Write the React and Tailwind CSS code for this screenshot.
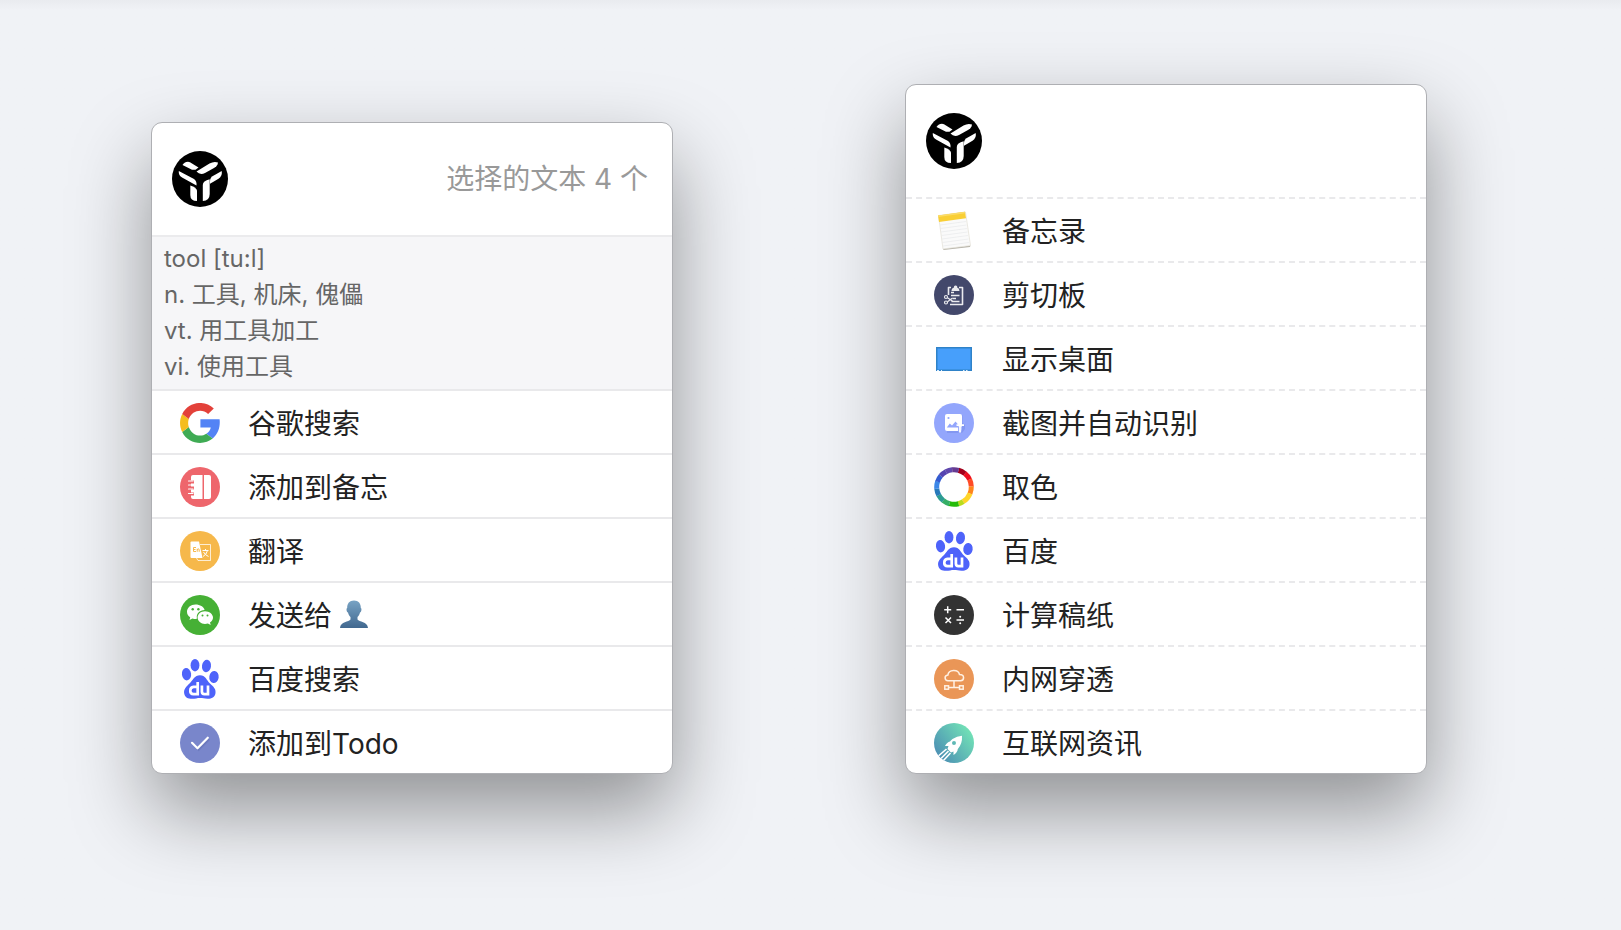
function Circle({ fill, children }) {
  return (
    <svg viewBox="0 0 40 40" className="size-10 shrink-0" aria-hidden="true">
      <circle cx="20" cy="20" r="20" fill={fill} />
      {children}
    </svg>
  );
}

function Logo() {
  return (
    <svg viewBox="0 0 56 56" className="size-14 shrink-0" role="img" aria-label="Logo">
      <circle cx="28" cy="28" r="28" fill="#000" />
      <g fill="#fff">
        <path d="M10.500 14Q12 11 16 10.800L18 11.300L26.500 16.500L23.500 18.800L20 18.800Z" />
        <path d="M24.500 20.500L37.500 12.500Q42 10 46 11.500L45.500 13.500Q44.500 15.500 42 17L33 22Q28 24.500 24.500 20.500Z" />
        <path d="M6.800 20L22 28Q25 30 24.500 34.500L10.500 26.800Q6.200 24.500 6.800 20Z" />
        <path d="M49.700 20L40 25.500Q37.500 27.500 38 32.800L46.500 27.800Q50.700 25 49.700 20Z" />
        <path d="M18.300 34.500L21 35.500Q25 37.500 25 40V50Q18.300 50 18.300 44Z" />
        <path d="M30.800 34Q30.800 29.800 37.700 28.300V43Q37.700 49.500 30.800 50Z" />
      </g>
    </svg>
  );
}

function GoogleIcon() {
  return (
    <svg viewBox="0 0 40 40" className="size-10 shrink-0" aria-hidden="true">
      <path fill="#5383f5" d="M20.400 16.200H39.600C40.400 23.500 38.500 30.500 32.700 35.600L26.300 30.700C28.900 29 30.300 26.900 30.800 24.400H20.400Z" />
      <path fill="#3fab54" d="M32.700 35.600C24.500 42.500 8.500 41.800 2.200 29L8.800 23.900C11.600 32.300 20.500 34.700 26.300 30.700Z" />
      <path fill="#f4bd1e" d="M2.200 29C-.7 23.200 -.7 16.800 2.200 11L8.800 16.100C7.900 18.700 7.900 21.300 8.800 23.900Z" />
      <path fill="#e3413a" d="M2.200 11C8.500 -1.500 24.500 -3.400 33.800 5.400L28.100 11C22 5.300 12 7.400 8.800 16.100Z" />
    </svg>
  );
}

function NotebookIcon() {
  return (
    <Circle fill="#ee666c">
      <path fill="#fff" d="M13 8H22.500V32H13Q11 32 11 30V28.500H14V25.500H11V22.500H14V19.500H11V16.500H14V13.500H11V10Q11 8 13 8ZM24 8H29Q31 8 31 10V30Q31 32 29 32H24Z" />
      <path stroke="#fff" strokeWidth="1.200" strokeLinecap="round" fill="none" d="M8.500 14H13M8.500 18H13M8.500 22H13M8.500 26.500H13" />
    </Circle>
  );
}

function TranslateIcon() {
  return (
    <Circle fill="#f6b84b">
      <path d="M20 13.500H30.500V29.500H18L16.500 27" fill="none" stroke="#fff" strokeOpacity=".75" strokeWidth="1" />
      <path fill="#fff" d="M11.500 10.500H19L22.500 27H11.500Q10.500 27 10.500 26V11.500Q10.500 10.500 11.500 10.500Z" />
      <path fill="none" stroke="#f6b84b" strokeWidth="1" d="M16 16.500H13.500V20.500H16M13.500 18.500H15.500M17.200 20.800V17.800M17.200 18.500Q19.200 17 19.200 18.800V20.800" />
      <path fill="none" stroke="#fff" strokeWidth="1" d="M22.500 19.500H28.500M25.500 18V19.500M27.500 19.500Q26.500 23.500 23 25.500M23.500 21Q25 24 28.500 25.500" />
    </Circle>
  );
}

function WechatIcon() {
  return (
    <Circle fill="#46b035">
      <path fill="#fff" d="M15.500 9.500C10.800 9.500 7 12.700 7 16.700C7 19 8.200 21 10.200 22.300L9.500 25L12.500 23.400C14 23.900 15.500 24 17 23.800C15.800 18.300 19.700 15.200 24.600 15C23.800 11.800 20 9.500 15.500 9.500Z" />
      <path fill="#fff" d="M25 16.200C20.900 16.200 17.600 19 17.600 22.600C17.600 26.200 20.900 29 25 29C26 29 27 28.800 27.900 28.500L30.700 30L30 27.500C31.900 26.300 33 24.500 33 22.600C33 19 29.200 16.200 25 16.200Z" />
      <g fill="#46b035">
        <circle cx="12.700" cy="14.300" r="1.200" />
        <circle cx="18.400" cy="14.300" r="1.200" />
        <circle cx="22.500" cy="20.500" r="1" />
        <circle cx="27.500" cy="20.500" r="1" />
      </g>
    </Circle>
  );
}

function BaiduIcon() {
  return (
    <svg viewBox="0 0 40 40" className="size-10 shrink-0" aria-hidden="true">
      <g fill="#4e63fa">
        <ellipse cx="15" cy="6.200" rx="4.400" ry="6.200" />
        <ellipse cx="26.500" cy="7" rx="4.500" ry="6.200" transform="rotate(8 26.500 7)" />
        <ellipse cx="6.500" cy="15.200" rx="4.600" ry="6.200" transform="rotate(-8 6.500 15.200)" />
        <ellipse cx="34" cy="18" rx="4.700" ry="6" transform="rotate(8 34 18)" />
        <path d="M20 16.200C25.500 16.200 26.500 21 30 24.500C33.500 28 36 29.500 35.500 34C35 38.500 31 40 27.500 39.800C24 39.600 23 39 20 39C17 39 15.500 39.800 12 39.800C8 39.800 5 38.500 4.200 34.500C3.400 30 6.500 27.500 9.500 24.500C13 21 14.500 16.200 20 16.200Z" />
      </g>
      <g fill="none" stroke="#fff" strokeWidth="2.700">
        <path d="M17.700 23V36.500M17.700 27.800H13.500Q10.300 28.300 10.300 31.500V32Q10.300 35 13.500 35.200H17.700" />
        <path d="M21.900 26.500V32.500Q21.900 35.200 24.400 35.200H28V26.500" />
      </g>
    </svg>
  );
}

function CheckIcon() {
  return (
    <Circle fill="#7986cb">
      <path d="M12.500 20L17.700 25.500L28 15" transform="translate(1 1)" fill="none" stroke="#5f6cb0" strokeOpacity=".45" strokeWidth="2.500" />
      <path d="M12 19.800L17.500 25.300L27.800 14.700" fill="none" stroke="#fff" strokeWidth="2.200" strokeLinecap="round" strokeLinejoin="round" />
    </Circle>
  );
}

function NotesIcon() {
  return (
    <svg viewBox="0 0 40 40" className="size-10 shrink-0" aria-hidden="true">
      <path d="M9 37.500L36.500 34.500L36 36L9.500 39Z" fill="#b5b2a8" />
      <path d="M4.500 4.500L31.500 1L36.500 34.500L9 38Z" fill="#fafafa" stroke="#e2e0d6" strokeWidth=".7" />
      <path d="M4 4.500L31 .800L32 7.200L5 11Z" fill="#f9cf35" />
      <path d="M4 4.500L31 .800L31.200 2.200L4.200 6Z" fill="#fbdc68" />
      <path d="M6 14L32 10.500M6.500 17.500L32.500 14M7 21L33 17.500M7.500 24.500L33.500 21M8 28L34 24.500M8.500 31.500L34.500 28M9 35L35 31.500" stroke="#e8e9eb" strokeWidth=".7" />
    </svg>
  );
}

function ClipboardIcon() {
  return (
    <Circle fill="#43486b">
      <g fill="none" stroke="#ebebef" strokeWidth="1.600" strokeLinejoin="round">
        <path d="M17 12.500H14.500V20M25 12.500H28.500V29.500H16" />
        <path d="M17 17.500H20M17 20.500H25.500M18.500 23.500H22M17.500 26.500H25.500" strokeWidth="1.300" />
        <circle cx="12" cy="22" r="1.500" strokeWidth="1.200" />
        <circle cx="12" cy="27.500" r="1.500" strokeWidth="1.200" />
        <path d="M13.500 22.700L19 26.500M13.500 26.800L18.500 23" strokeWidth="1.200" />
      </g>
      <path fill="#ebebef" d="M17.500 16Q17.500 13 20 12.500V11.500A1.800 1.800 0 0 1 23.200 11.500V12.500Q25.500 13 25.500 16Z" />
    </Circle>
  );
}

function DesktopIcon() {
  return (
    <svg viewBox="0 0 40 40" className="size-10 shrink-0" aria-hidden="true">
      <rect x="2" y="8" width="36" height="24" fill="#2f82c8" />
      <rect x="3.500" y="9.500" width="33" height="21" fill="#479ffb" />
      <path d="M3 31.500H5M7 31.500H8M29 31.500H30.500M32 31.500H33.500" stroke="#d9edff" strokeWidth="1.200" />
    </svg>
  );
}

function CaptureIcon() {
  return (
    <Circle fill="#93a6fc">
      <path fill="#7388e6" fillOpacity=".5" d="M13 12H28.500V20L31 22V26L28 30H13Z" />
      <rect x="11" y="11" width="17" height="17" rx="2" fill="#fff" />
      <circle cx="14.500" cy="15" r="1.100" fill="#93a6fc" />
      <path d="M12.800 24.500L15.800 20.500L18 22.500L21.500 18.500L24.500 22V24.500Z" fill="#93a6fc" />
      <path d="M25.900 23.500V29.500" stroke="#93a6fc" strokeWidth="3.600" />
      <path d="M22.500 22.200H30M26 20.500V29.500" stroke="#fff" strokeWidth="1.800" />
    </Circle>
  );
}

const wheel = ["#a3001b", "#ec0e20", "#ff4b26", "#ff851c", "#ffd529", "#b9dc1c", "#25bb08", "#35ae66", "#2d9c93", "#2879ba", "#3b87e8", "#345cd0", "#5544b0", "#6048ad", "#663b91"];
const wheelAngles = [-75, -51, -26, -2, 22, 58, 75, 105, 128, 152, 174, 198, 220, 242, 264, 285];

function ColorIcon() {
  return (
    <svg viewBox="0 0 40 40" className="size-10 shrink-0" aria-hidden="true">
      {wheel.map((color, i) => {
        const span = wheelAngles[i + 1] - wheelAngles[i] + 0.5;
        return (
          <circle key={color} cx="20" cy="20" r="17.300" fill="none" stroke={color} strokeWidth="5" pathLength="360" strokeDasharray={`${span} ${360 - span}`} transform={`rotate(${wheelAngles[i]} 20 20)`} />
        );
      })}
    </svg>
  );
}

function CalculatorIcon() {
  return (
    <Circle fill="#333">
      <g stroke="#fff" strokeWidth="1.500" fill="none">
        <path d="M10.200 14.700H17.200M13.700 11.200V18.200M22.500 14.700H30M11.500 22.500L17 28M17 22.500L11.500 28M22.500 25H30" />
      </g>
      <circle cx="26.200" cy="21.800" r="1" fill="#fff" />
      <circle cx="26.200" cy="28.200" r="1" fill="#fff" />
    </Circle>
  );
}

function TunnelIcon() {
  return (
    <Circle fill="#ea9657">
      <g fill="none" stroke="#fff1e4" strokeWidth="1.500">
        <path d="M14 21.800C10.500 21.500 9.800 16.500 13.900 16C14.500 10 24.500 10 25.500 15.500C31 15.500 30.500 21.500 26.500 21.800Z" />
        <path d="M20 22V28.500M14.500 28.500H25.500" />
        <rect x="10.800" y="26.800" width="3.700" height="3.400" />
        <rect x="25.500" y="26.800" width="3.700" height="3.400" />
      </g>
    </Circle>
  );
}

function RocketIcon() {
  return (
    <svg viewBox="0 0 40 40" className="size-10 shrink-0" aria-hidden="true">
      <defs>
        <linearGradient id="rocket-sky" x1="0.100" y1="0.800" x2="0.900" y2="0.200">
          <stop offset="0" stopColor="#4d92b4" />
          <stop offset="1" stopColor="#71e0b6" />
        </linearGradient>
        <clipPath id="rocket-disc">
          <circle cx="20" cy="20" r="20" />
        </clipPath>
      </defs>
      <circle cx="20" cy="20" r="20" fill="url(#rocket-sky)" />
      <path fill="#fff" fillRule="evenodd" d="M28 12.800Q23 13 18.500 16Q17 17 16 18.500Q13 19 11 23L14.500 23L13.500 26L17 29.500L19.500 28.500L19.500 32Q23.500 29.500 23.800 26Q28.500 21 28 12.800ZM20 17.900A2 2 0 1 1 20 21.900A2 2 0 1 1 20 17.900Z" />
      <path d="M12.500 26L3.800 33.500M14.500 28L6 36.500M16.500 30L9 38" stroke="#fff" strokeWidth="1.600" clipPath="url(#rocket-disc)" />
    </svg>
  );
}

function Person() {
  return (
    <svg viewBox="0 0 28 28" className="mb-1 size-7" role="img" aria-label="联系人">
      <defs>
        <linearGradient id="person-tone" x1="0" y1="0" x2="0" y2="1">
          <stop offset="0" stopColor="#78a3c4" />
          <stop offset="1" stopColor="#41688f" />
        </linearGradient>
      </defs>
      <path fill="url(#person-tone)" d="M14 .5C9.500 .5 7 3.500 7.200 8C6 8.500 6.500 12 8 12.500C8.500 14.500 9.500 16 10.500 17V19.500C9 22 .5 21.500 0 28H28C27.500 21.500 19 22 17.500 19.500V17C18.500 16 19.500 14.500 20 12.500C21.500 12 22 8.500 20.800 8C21 3.500 18.500 .5 14 .5Z" />
    </svg>
  );
}

const textActions = [
  { label: "谷歌搜索", Icon: GoogleIcon },
  { label: "添加到备忘", Icon: NotebookIcon },
  { label: "翻译", Icon: TranslateIcon },
  { label: "发送给", Icon: WechatIcon, Extra: Person },
  { label: "百度搜索", Icon: BaiduIcon },
  { label: "添加到Todo", Icon: CheckIcon },
];

const quickActions = [
  { label: "备忘录", Icon: NotesIcon },
  { label: "剪切板", Icon: ClipboardIcon },
  { label: "显示桌面", Icon: DesktopIcon },
  { label: "截图并自动识别", Icon: CaptureIcon },
  { label: "取色", Icon: ColorIcon },
  { label: "百度", Icon: BaiduIcon },
  { label: "计算稿纸", Icon: CalculatorIcon },
  { label: "内网穿透", Icon: TunnelIcon },
  { label: "互联网资讯", Icon: RocketIcon },
];

function Panel({ children, label }) {
  return (
    <section
      aria-label={label}
      className="min-w-0 flex-1 overflow-hidden rounded-[11px] border border-[#aeafb3] bg-white shadow-[0_36px_80px_rgba(0,0,0,0.4)]"
    >
      {children}
    </section>
  );
}

function ActionList({ items, dashed }) {
  return (
    <ul>
      {items.map(({ label, Icon, Extra }) => (
        <li key={label} className={`border-b-2 border-[#e9e9eb] last:border-b-0 ${dashed ? "border-dashed" : ""}`}>
          <button type="button" className="flex w-full items-start gap-7 px-7 pt-3 pb-2 text-left">
            <Icon />
            <span className="flex items-center gap-2 text-[28px] leading-[42px] whitespace-nowrap text-[#222]">
              {label}
              {Extra && <Extra />}
            </span>
          </button>
        </li>
      ))}
    </ul>
  );
}

export default function App() {
  return (
    <main className="min-h-screen bg-[#f0f2f6] bg-linear-to-b from-[#e9ebef] to-[#f0f2f6] to-[10px] pt-[84px] pb-20 font-['Inter','Noto_Sans_CJK_SC',sans-serif]">
      <div className="flex items-end gap-[232px] pr-[194px] pl-[151px]">
        <Panel label="文本操作">
          <header className="flex items-center justify-between border-b-2 border-[#ebebed] py-7 pr-6 pl-5">
            <Logo />
            <p className="text-[28px] leading-[42px] text-[#999]">选择的文本 4 个</p>
          </header>
          <div className="border-b-2 border-[#e9e9eb] bg-[#f6f6f8] px-3 py-1 text-[24px] leading-9 text-[#666]">
            <p>tool [tu:l]</p>
            <p>n. 工具, 机床, 傀儡</p>
            <p>vt. 用工具加工</p>
            <p>vi. 使用工具</p>
          </div>
          <ActionList items={textActions} />
        </Panel>
        <Panel label="快捷操作">
          <header className="border-b-2 border-dashed border-[#e9e9eb] py-7 pl-5">
            <Logo />
          </header>
          <ActionList items={quickActions} dashed />
        </Panel>
      </div>
    </main>
  );
}
